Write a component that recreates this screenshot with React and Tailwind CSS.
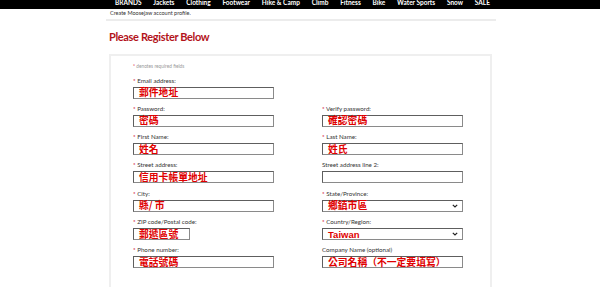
import React from "react";

const nav = ["BRANDS","Jackets","Clothing","Footwear","Hike & Camp","Climb","Fitness","Bike","Water Sports","Snow","SALE"];

function Field({ label, req, value, w = "w-[141px]", select, latin }) {
  return (
    <div className="flex flex-col h-[28.33px]">
      <div className="h-[8px] leading-[8px] text-[6.2px] text-[#333] whitespace-nowrap">
        {req && <span className="text-[#d0021b]">* </span>}
        {label}
      </div>
      <div className={`mt-[2px] h-[12px] ${w} border-[1.5px] border-[#5e5e5e] border-b-[#8a8a8a] border-r-[#8a8a8a] bg-white flex items-center pl-[5px] pr-[4px]`}>
        <span
          className={
            latin
              ? "text-[9.5px] leading-[9px] font-bold text-[#e00000] font-['Liberation_Sans',sans-serif]"
              : "text-[9.8px] leading-[9px] font-bold text-[#e00000] font-['Noto_Sans_CJK_TC',sans-serif] whitespace-nowrap"
          }
        >
          {value}
        </span>
        {select && (
          <svg className="ml-auto" width="6" height="4" viewBox="0 0 6 4">
            <polyline points="0.8,0.8 3,3 5.2,0.8" fill="none" stroke="#222" strokeWidth="1.2" />
          </svg>
        )}
      </div>
    </div>
  );
}

export default function App() {
  return (
    <div className="w-[600px] h-[287px] overflow-hidden bg-white font-['Lato',sans-serif]">
      <div className="h-[9px] bg-black overflow-hidden">
        <div className="ml-[115px] w-[375px] flex justify-between text-[6.5px] leading-[6px] font-bold text-white">
          {nav.map((n) => (
            <span key={n} className="whitespace-nowrap">{n}</span>
          ))}
        </div>
      </div>
      <div className="ml-[110px] h-[9px] leading-[9px] text-[5.5px] text-[#333]">Create Moosejaw account profile.</div>
      <div className="ml-[106px] mt-[1px] w-[390px] h-[1.5px] bg-[#ececec]" />
      <h1 className="ml-[109px] mt-[10px] h-[12px] leading-[12px] text-[11px] tracking-[-0.35px] font-bold text-[#b3131b]">Please Register Below</h1>
      <div className="ml-[109px] mt-[11px] w-[383px] h-[240px] border-2 border-b-0 border-[#efefef] pl-[22px]">
        <div className="mt-[7px] h-[6px] leading-[6px] text-[4.8px] text-[#999]">
          <span className="text-[#d0021b]">* </span>denotes required fields
        </div>
        <div className="mt-[8px] grid grid-cols-[189px_141px]">
          <div className="flex flex-col">
            <Field req label="Email address:" value="郵件地址" />
            <Field req label="Password:" value="密碼" />
            <Field req label="First Name:" value="姓名" />
            <Field req label="Street address:" value="信用卡帳單地址" />
            <Field req label="City:" value="縣/ 市" />
            <Field req label="ZIP code/Postal code:" value="郵遞區號" w="w-[57px]" />
            <Field req label="Phone number:" value="電話號碼" />
          </div>
          <div className="flex flex-col pt-[28.33px]">
            <Field req label="Verify password:" value="確認密碼" />
            <Field req label="Last Name:" value="姓氏" />
            <Field label="Street address line 2:" value="" />
            <Field req label="State/Province:" value="鄉鎮市區" select />
            <Field req label="Country/Region:" value="Taiwan" select latin />
            <Field label="Company Name (optional)" value="公司名稱（不一定要填寫）" />
          </div>
        </div>
      </div>
    </div>
  );
}
